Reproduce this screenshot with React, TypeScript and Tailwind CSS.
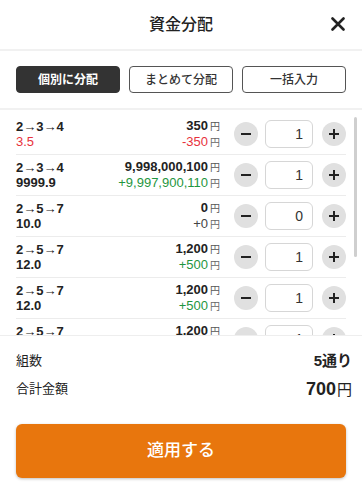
import { useState } from "react";

type Row = {
  combo: string;
  odds: string;
  oddsRed?: boolean;
  amount: string;
  diff: string;
  diffColor: "red" | "green" | "gray";
  count: number;
};

const rows: Row[] = [
  { combo: "2→3→4", odds: "3.5", oddsRed: true, amount: "350", diff: "-350", diffColor: "red", count: 1 },
  { combo: "2→3→4", odds: "9999.9", amount: "9,998,000,100", diff: "+9,997,900,110", diffColor: "green", count: 1 },
  { combo: "2→5→7", odds: "10.0", amount: "0", diff: "+0", diffColor: "gray", count: 0 },
  { combo: "2→5→7", odds: "12.0", amount: "1,200", diff: "+500", diffColor: "green", count: 1 },
  { combo: "2→5→7", odds: "12.0", amount: "1,200", diff: "+500", diffColor: "green", count: 1 },
  { combo: "2→5→7", odds: "12.0", amount: "1,200", diff: "+500", diffColor: "green", count: 1 },
];

const tabs = ["個別に分配", "まとめて分配", "一括入力"];

const App = () => {
  const [activeTab, setActiveTab] = useState<number>(0);
  const [counts, setCounts] = useState<number[]>(rows.map((r) => r.count));

  const change = (i: number, d: number) => {
    setCounts((prev) => prev.map((c, idx) => (idx === i ? Math.max(0, c + d) : c)));
  };

  return (
    <div className="flex h-[484px] w-[362px] flex-col overflow-hidden bg-white font-['Liberation_Sans','Noto_Sans_CJK_JP',sans-serif] text-[#222]">
      {/* header */}
      <div className="relative flex h-[51px] items-center justify-center border-b-2 border-[#f1f1f1]">
        <h1 className="text-[16px] font-medium">資金分配</h1>
        <button className="absolute right-[17px] top-[17px]">
          <svg width="14" height="14" viewBox="0 0 14 14">
            <path d="M1.5 1.5 L12.5 12.5 M12.5 1.5 L1.5 12.5" stroke="#222" strokeWidth="2.6" strokeLinecap="round" />
          </svg>
        </button>
      </div>

      {/* tabs */}
      <div className="flex gap-[9px] border-b-2 border-[#f1f1f1] px-4 pb-[15px] pt-[15px]">
        {tabs.map((t, i) => (
          <button
            key={t}
            onClick={() => setActiveTab(i)}
            className={
              i === activeTab
                ? "h-[27px] flex-1 rounded-[4px] border border-[#333] bg-[#333] text-[12px] font-bold text-white"
                : "h-[27px] flex-1 rounded-[4px] border border-[#555] bg-white text-[12px] font-medium text-[#333]"
            }
          >
            {t}
          </button>
        ))}
      </div>

      {/* list */}
      <div className="relative h-[225px] overflow-hidden pt-1">
        {rows.map((r, i) => (
          <div key={i} className="mx-4 flex h-[41px] items-center border-b border-[#ececec]">
            <div className="flex-1 text-[13px] leading-[15px]">
              <div className="font-semibold">{r.combo}</div>
              <div className={r.oddsRed ? "font-medium text-[#e8323c]" : "font-semibold"}>{r.odds}</div>
            </div>
            <div className="text-right text-[13px] leading-[15px]">
              <div className="font-bold">
                {r.amount}
                <span className="ml-[2px] text-[10px] font-normal text-[#555]">円</span>
              </div>
              <div
                className={
                  r.diffColor === "red"
                    ? "text-[#e8323c]"
                    : r.diffColor === "green"
                      ? "text-[#1f9640]"
                      : "text-[#444]"
                }
              >
                {r.diff}
                <span className="ml-[2px] text-[10px] text-[#666]">円</span>
              </div>
            </div>
            <div className="ml-[14px] flex items-center">
              <button
                onClick={() => change(i, -1)}
                className="flex h-6 w-6 items-center justify-center rounded-full bg-[#e0e0e0]"
              >
                <svg width="12" height="12" viewBox="0 0 12 12">
                  <path d="M1 6 H11" stroke="#222" strokeWidth="2" />
                </svg>
              </button>
              <div className="ml-[7px] flex h-[28px] w-[48px] items-center justify-end rounded-[6px] border border-[#d6d6d6] pr-[9px] text-[14px] text-[#333]">
                {counts[i]}
              </div>
              <button
                onClick={() => change(i, 1)}
                className="ml-[9px] flex h-6 w-6 items-center justify-center rounded-full bg-[#e0e0e0]"
              >
                <svg width="12" height="12" viewBox="0 0 12 12">
                  <path d="M1 6 H11 M6 1 V11" stroke="#222" strokeWidth="2" />
                </svg>
              </button>
            </div>
          </div>
        ))}
        <div className="absolute right-[5px] top-[7px] h-[140px] w-[3px] rounded-full bg-[#cfcfcf]" />
      </div>

      {/* footer */}
      <div className="border-t border-[#eeeeee] px-4 pt-[11px]">
        <div className="-mr-[6px] flex h-[28px] items-center justify-between">
          <span className="text-[13px]">組数</span>
          <span className="text-[15px] font-bold">5通り</span>
        </div>
        <div className="-mr-[6px] flex h-[28px] items-center justify-between">
          <span className="text-[13px]">合計金額</span>
          <span className="text-[18px] font-bold">
            700<span className="ml-[1px] text-[15px] font-normal">円</span>
          </span>
        </div>
        <button className="mt-[21px] h-[54px] w-full rounded-[6px] bg-[#e8760d] text-[17px] font-medium text-white shadow-[0_1px_3px_rgba(0,0,0,0.25)]">
          適用する
        </button>
      </div>
    </div>
  );
};

export default App;
